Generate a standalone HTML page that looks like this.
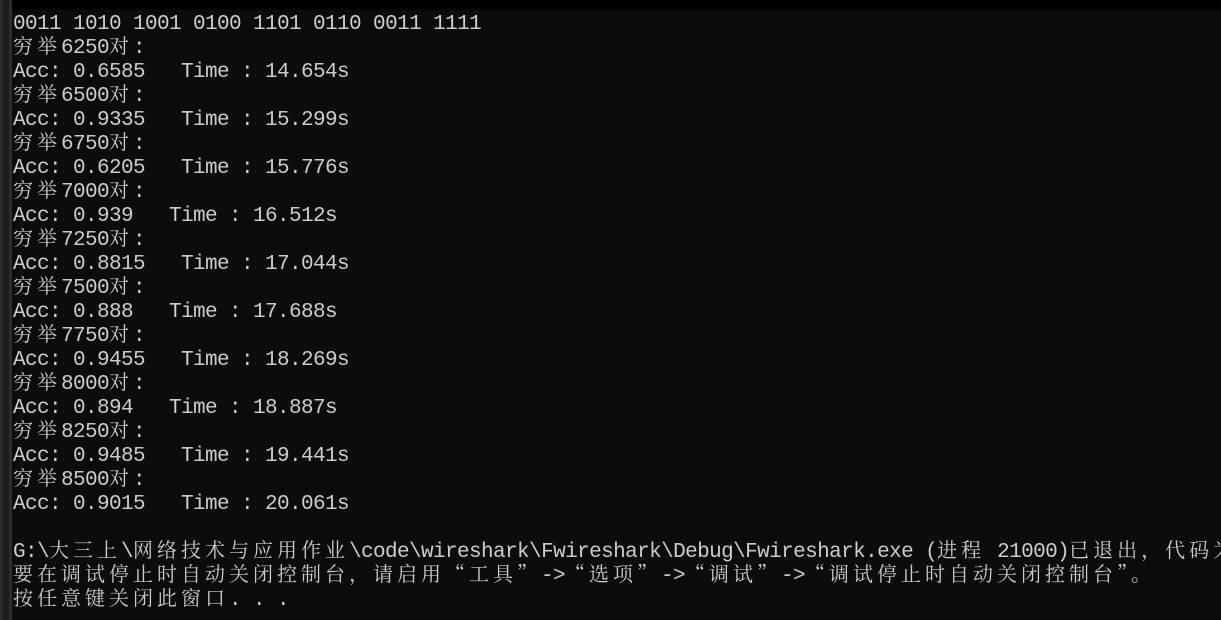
<!DOCTYPE html>
<html><head><meta charset="utf-8"><style>
html,body{margin:0;width:1221px;height:620px;background:#0c0c0c;overflow:hidden;position:relative}
.top{position:absolute;left:12px;top:0;width:1209px;height:10px;background:#000}
.l1{position:absolute;left:0;top:0;width:3px;height:620px;background:#2b2b2b}
.l2{position:absolute;left:3px;top:0;width:6px;height:620px;background:#1c1c1c}
.l3{position:absolute;left:9px;top:0;width:3px;height:620px;background:#2e2e2e}
.t{position:absolute;left:13px;top:13px;margin:0;font:21px/24px "Liberation Mono",monospace;letter-spacing:-0.6px;color:#cccccc;white-space:nowrap}
.t div{height:24px;line-height:24px;white-space:pre}
.c{font-family:"Noto Serif CJK SC","Noto Sans CJK SC",serif;letter-spacing:4px;font-size:20px;line-height:1px}
</style></head><body>
<div class="top"></div><div class="l1"></div><div class="l2"></div><div class="l3"></div>
<div class="t"><div>0011 1010 1001 0100 1101 0110 0011 1111</div><div><span class="c">穷举</span>6250<span class="c">对</span>:</div><div>Acc: 0.6585   Time : 14.654s</div><div><span class="c">穷举</span>6500<span class="c">对</span>:</div><div>Acc: 0.9335   Time : 15.299s</div><div><span class="c">穷举</span>6750<span class="c">对</span>:</div><div>Acc: 0.6205   Time : 15.776s</div><div><span class="c">穷举</span>7000<span class="c">对</span>:</div><div>Acc: 0.939   Time : 16.512s</div><div><span class="c">穷举</span>7250<span class="c">对</span>:</div><div>Acc: 0.8815   Time : 17.044s</div><div><span class="c">穷举</span>7500<span class="c">对</span>:</div><div>Acc: 0.888   Time : 17.688s</div><div><span class="c">穷举</span>7750<span class="c">对</span>:</div><div>Acc: 0.9455   Time : 18.269s</div><div><span class="c">穷举</span>8000<span class="c">对</span>:</div><div>Acc: 0.894   Time : 18.887s</div><div><span class="c">穷举</span>8250<span class="c">对</span>:</div><div>Acc: 0.9485   Time : 19.441s</div><div><span class="c">穷举</span>8500<span class="c">对</span>:</div><div>Acc: 0.9015   Time : 20.061s</div><div></div><div>G:\<span class="c">大三上</span>\<span class="c">网络技术与应用作业</span>\code\wireshark\Fwireshark\Debug\Fwireshark.exe (<span class="c">进程</span> 21000)<span class="c">已退出，代码为</span></div><div><span class="c">要在调试停止时自动关闭控制台，请启用“工具”</span>-&gt;<span class="c">“选项”</span>-&gt;<span class="c">“调试”</span>-&gt;<span class="c">“调试停止时自动关闭控制台”。</span></div><div><span class="c">按任意键关闭此窗口</span>. . .</div></div>
</body></html>
